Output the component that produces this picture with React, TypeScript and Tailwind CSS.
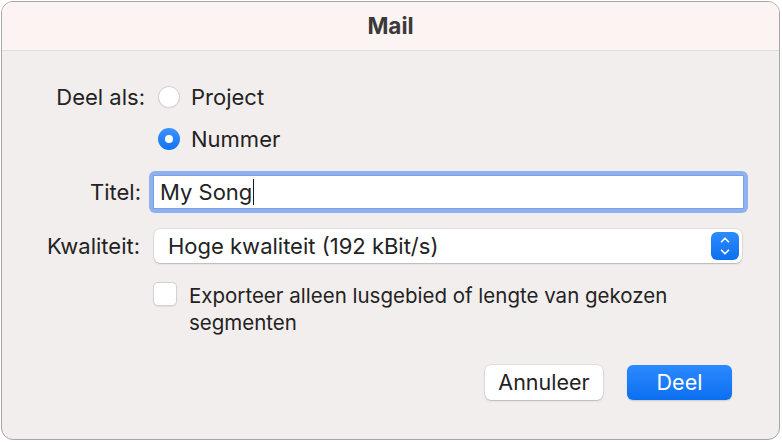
import { ChevronUp, ChevronDown } from 'lucide-react'

function Radio({ checked }: { checked?: boolean }) {
  if (checked) {
    return (
      <span className="flex h-[22px] w-[22px] items-center justify-center rounded-full bg-gradient-to-b from-[#3b93ff] to-[#0a72f5]">
        <span className="block h-[8px] w-[8px] rounded-full bg-white" />
      </span>
    )
  }
  return <span className="block h-[22px] w-[22px] rounded-full border border-[#d6d2d2] bg-white shadow-[0_0.5px_1px_rgba(0,0,0,0.08)]" />
}

export default function App() {
  return (
    <div className="h-[442px] w-[782px] bg-white p-px font-['Inter','Liberation_Sans',sans-serif] text-[22px] text-[#232323]">
      <div className="flex h-[439px] w-[779px] flex-col overflow-hidden rounded-[12px] border border-[#a8a6a6] bg-[#f3eeee]">
        {/* Title bar */}
        <div className="flex h-[49px] shrink-0 items-center justify-center border-b border-[#e1dbdb] bg-[#fcf3f3]">
          <span className="text-[22.5px] font-bold text-[#3b3a3a]">Mail</span>
        </div>

        {/* Form */}
        <div className="flex flex-col pt-[30px]">
          {/* Deel als */}
          <div className="flex h-[32px] items-center">
            <span className="w-[143px] text-right">Deel als:</span>
            <span className="ml-[13px] flex"><Radio /></span>
            <span className="ml-[11px]">Project</span>
          </div>
          <div className="mt-[10px] flex h-[32px] items-center">
            <span className="ml-[156px] flex"><Radio checked /></span>
            <span className="ml-[11px]">Nummer</span>
          </div>

          {/* Titel */}
          <div className="mt-[16px] flex h-[42px] items-center">
            <span className="w-[139px] text-right">Titel:</span>
            <div className="ml-[8px] flex h-[42px] w-[599px] items-center rounded-[6px] bg-[#8fb1f0] p-[4px]">
              <div className="flex h-full w-full items-center border border-[#7d9fe6] bg-white px-[6px]">
                <span>My Song</span>
                <span className="ml-px h-[26px] w-px bg-[#1a1a1a]" />
              </div>
            </div>
          </div>

          {/* Kwaliteit */}
          <div className="mt-[16px] flex h-[34px] items-center">
            <span className="w-[138px] text-right">Kwaliteit:</span>
            <div className="ml-[14px] flex h-[34px] w-[588px] items-center justify-between rounded-[6px] bg-white pl-[14px] pr-[3px] shadow-[0_0_0_0.5px_rgba(0,0,0,0.12),0_1px_1.5px_rgba(0,0,0,0.18)]">
              <span>Hoge kwaliteit (192 kBit/s)</span>
              <span className="flex h-[28px] w-[28px] flex-col items-center justify-center rounded-[6px] bg-gradient-to-b from-[#2d8bff] to-[#0a6ff0] text-white">
                <ChevronUp size={14} strokeWidth={3} className="-mb-[1px]" />
                <ChevronDown size={14} strokeWidth={3} className="-mt-[1px]" />
              </span>
            </div>
          </div>

          {/* Checkbox */}
          <div className="mt-[19px] flex">
            <span className="ml-[151px] block h-[24px] w-[24px] shrink-0 rounded-[5px] border border-[#d6d2d2] bg-white shadow-[0_0.5px_1px_rgba(0,0,0,0.08)]" />
            <span className="ml-[12px] w-[560px] text-[20.5px] leading-[27px]">
              Exporteer alleen lusgebied of lengte van gekozen segmenten
            </span>
          </div>

          {/* Buttons */}
          <div className="mt-[29px] flex justify-end gap-[24px] pr-[47px] text-[21.5px]">
            <button className="h-[35px] w-[118px] rounded-[6px] bg-white text-[#232323] shadow-[0_0_0_0.5px_rgba(0,0,0,0.12),0_1px_1.5px_rgba(0,0,0,0.18)]">
              Annuleer
            </button>
            <button className="h-[35px] w-[105px] rounded-[6px] bg-gradient-to-b from-[#2b8aff] to-[#0a6ff0] text-white shadow-[0_1px_1.5px_rgba(0,0,0,0.15)]">
              Deel
            </button>
          </div>
        </div>
      </div>
    </div>
  )
}
